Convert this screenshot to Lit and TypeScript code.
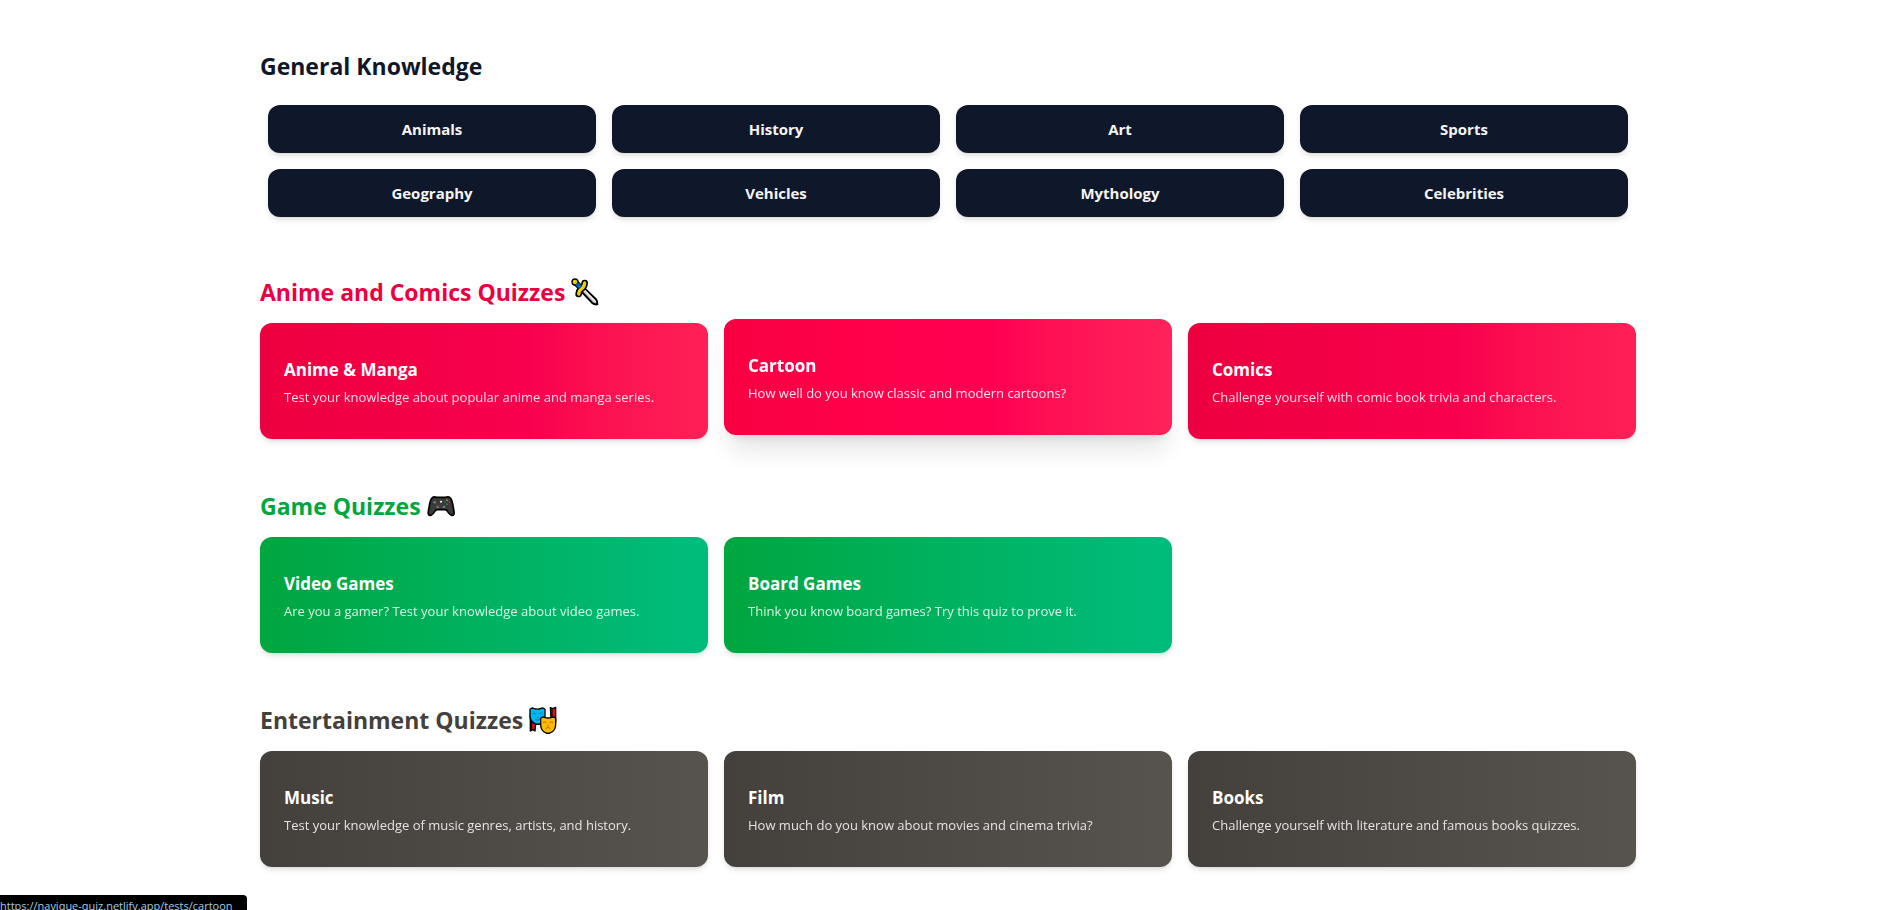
import { LitElement, html, css, svg } from "lit";
import { customElement, property } from "lit/decorators.js";

interface Quiz {
  title: string;
  text: string;
  active?: boolean;
}

interface Group {
  title: string;
  tone: "rose" | "green" | "stone";
  quizzes: Quiz[];
}

const TOPICS = ["Animals", "History", "Art", "Sports", "Geography", "Vehicles", "Mythology", "Celebrities"];

const GROUPS: Group[] = [
  {
    title: "Anime and Comics Quizzes",
    tone: "rose",
    quizzes: [
      { title: "Anime & Manga", text: "Test your knowledge about popular anime and manga series." },
      { title: "Cartoon", text: "How well do you know classic and modern cartoons?", active: true },
      { title: "Comics", text: "Challenge yourself with comic book trivia and characters." },
    ],
  },
  {
    title: "Game Quizzes",
    tone: "green",
    quizzes: [
      { title: "Video Games", text: "Are you a gamer? Test your knowledge about video games." },
      { title: "Board Games", text: "Think you know board games? Try this quiz to prove it." },
    ],
  },
  {
    title: "Entertainment Quizzes",
    tone: "stone",
    quizzes: [
      { title: "Music", text: "Test your knowledge of music genres, artists, and history." },
      { title: "Film", text: "How much do you know about movies and cinema trivia?" },
      { title: "Books", text: "Challenge yourself with literature and famous books quizzes." },
    ],
  },
];

const ICONS = {
  // dagger
  rose: svg`
    <path d="M27 36 L36 27 L74 63 Q80 70 79 79 Q70 80 63 74 Z" fill="#c8c8c8" stroke="#000" stroke-width="6" stroke-linejoin="round"/>
    <path d="M35 31 L74 71" stroke="#f0f0f0" stroke-width="4"/>
    <path d="M12 12 L30 30" stroke="#000" stroke-width="18"/>
    <circle cx="12" cy="12" r="11" fill="#000"/>
    <path d="M41 15 Q40 26 32 32 Q24 37 23 48" fill="none" stroke="#000" stroke-width="20" stroke-linecap="round"/>
    <circle cx="12" cy="12" r="7" fill="#e8cf0c"/>
    <path d="M41 15 Q40 26 32 32 Q24 37 23 48" fill="none" stroke="#e8cf0c" stroke-width="10" stroke-linecap="round"/>
    <path d="M16 16 L29 29" stroke="#0063b1" stroke-width="11"/>`,
  // game controller
  green: svg`
    <path d="M16 17 Q21 13 29 16 H56 Q64 13 69 17 Q74 20 77 36 L81 58 Q83 71 74 70 Q68 69 60 56 Q58 53 54 53 H31 Q27 53 25 56 Q17 69 11 70 Q2 71 4 58 L8 36 Q11 20 16 17 Z" fill="#3b3b3b" stroke="#000" stroke-width="5" stroke-linejoin="round"/>
    <circle cx="23" cy="31" r="4" fill="#777"/><circle cx="51" cy="45" r="4" fill="#777"/>
    <path d="M32 40 V50 M27 45 H37" stroke="#777" stroke-width="3"/>
    <circle cx="42" cy="29" r="3" fill="#fff"/>
    <circle cx="60" cy="25" r="2.5" fill="#f0b400"/><circle cx="54" cy="31" r="2.5" fill="#0078d7"/>
    <circle cx="66" cy="31" r="2.5" fill="#e81123"/><circle cx="60" cy="37" r="2.5" fill="#16a34a"/>`,
  // theatre masks
  stone: svg`
    <path d="M4 26 V75 L11 71 L18 75 L20 52 Z" fill="#d50f25" stroke="#000" stroke-width="4" stroke-linejoin="round"/>
    <path d="M64 5 L71 8 L80 4 V48 L66 36 Z" fill="#d50f25" stroke="#000" stroke-width="4" stroke-linejoin="round"/>
    <path d="M69 9 V36" stroke="#000" stroke-width="3"/><path d="M8 44 V72" stroke="#000" stroke-width="3"/>
    <path d="M3 10 Q8 4 14 7 Q25 12 36 7 Q43 4 48 10 V30 Q48 47 32 54 Q26 56 20 54 Q3 47 3 30 Z" fill="#00b7f4" stroke="#000" stroke-width="4"/>
    <path d="M11 24 Q15 19 20 24 M30 24 Q35 19 40 24 M18 39 Q26 47 33 39 M24 34 H28" fill="none" stroke="#00639c" stroke-width="2.5"/>
    <path d="M35 37 Q40 31 46 34 Q57 38 68 34 Q75 31 80 37 V57 Q79 75 63 81 Q57 83 51 81 Q36 75 35 57 Z" fill="#ffb900" stroke="#000" stroke-width="4"/>
    <path d="M42 50 Q47 45 52 50 M62 50 Q67 45 72 50 M50 68 Q57 60 64 68 M55 59 H59" fill="none" stroke="#9a5b00" stroke-width="2.5"/>`,
};

@customElement("quiz-card")
export class QuizCard extends LitElement {
  @property({ attribute: false }) quiz!: Quiz;
  @property() tone = "rose";

  static styles = css`
    :host {
      display: block;
    }
    .card {
      display: block;
      box-sizing: border-box;
      height: 100%;
      padding: 32px 24px;
      border-radius: 12px;
      color: #fff;
      text-decoration: none;
      box-shadow: 0 4px 6px -1px rgb(0 0 0 / 0.1), 0 2px 4px -2px rgb(0 0 0 / 0.1);
    }
    .rose {
      background: linear-gradient(to right in oklab, oklch(58.6% 0.253 17.585), oklch(64.5% 0.246 16.439));
    }
    .green {
      background: linear-gradient(to right in oklab, oklch(62.7% 0.194 149.214), oklch(69.6% 0.17 162.48));
    }
    .stone {
      background: linear-gradient(to right in oklab, oklch(37.4% 0.01 67.558), oklch(44.4% 0.011 73.639));
    }
    .active,
    .card:hover {
      transform: translateY(-4px);
      filter: brightness(1.05);
      box-shadow: 0 20px 25px -5px rgb(0 0 0 / 0.1), 0 8px 10px -6px rgb(0 0 0 / 0.1);
    }
    .title {
      margin: 0 0 2px;
      font-size: 17px;
      line-height: 30px;
      font-weight: 700;
    }
    .text {
      margin: 0;
      font-size: 13px;
      line-height: 20px;
      opacity: 0.85;
    }
  `;

  render() {
    const { title, text, active } = this.quiz;
    return html`<a class="card ${this.tone} ${active ? "active" : ""}" href="#">
      <h3 class="title">${title}</h3>
      <p class="text">${text}</p>
    </a>`;
  }
}

@customElement("app-root")
export class AppRoot extends LitElement {
  static styles = css`
    :host {
      display: block;
      font-family: "Open Sans", "Noto Sans", sans-serif;
      background: #fff;
    }
    .page {
      display: flex;
      flex-direction: column;
      gap: 50px;
      box-sizing: border-box;
      max-width: 1440px;
      margin: 0 auto;
      padding: 49px 32px 40px;
    }
    .heading {
      display: flex;
      align-items: center;
      gap: 6px;
      margin: 0 0 14px;
      font-size: 23px;
      line-height: 34px;
      font-weight: 700;
      color: #0f172b;
    }
    .heading.rose {
      color: #ec003f;
    }
    .heading.green {
      color: #00a63e;
    }
    .heading.stone {
      color: #44403b;
    }
    .icon {
      width: 28px;
      height: 28px;
      flex: none;
    }
    .topics {
      display: grid;
      grid-template-columns: repeat(4, 1fr);
      gap: 16px;
      padding: 8px;
    }
    .topic {
      padding: 12px 16px;
      border: 0;
      border-radius: 12px;
      background: #0f172b;
      color: #f5f5f4;
      font: 700 15px/24px "Open Sans", "Noto Sans", sans-serif;
      box-shadow: 0 4px 6px -1px rgb(0 0 0 / 0.1), 0 2px 4px -2px rgb(0 0 0 / 0.1);
      cursor: pointer;
    }
    .cards {
      display: grid;
      grid-template-columns: repeat(3, 1fr);
      gap: 16px;
    }
    .status {
      position: fixed;
      left: 0;
      bottom: 0;
      box-sizing: border-box;
      height: 15px;
      padding: 2px 14px 0 0;
      overflow: hidden;
      border-radius: 0 4px 0 0;
      background: #000;
      color: #a5cbe6;
      font-size: 11px;
      line-height: 18px;
      white-space: nowrap;
    }
    @media (max-width: 900px) {
      .topics {
        grid-template-columns: repeat(2, 1fr);
      }
      .cards {
        grid-template-columns: 1fr;
      }
    }
  `;

  render() {
    return html`
      <main class="page">
        <section>
          <h2 class="heading">General Knowledge</h2>
          <div class="topics">${TOPICS.map((t) => html`<button class="topic" type="button">${t}</button>`)}</div>
        </section>
        ${GROUPS.map(
          (g) => html`<section>
            <h2 class="heading ${g.tone}">
              ${g.title}
              <svg class="icon" viewBox="0 0 84 84" aria-hidden="true">${ICONS[g.tone]}</svg>
            </h2>
            <div class="cards">
              ${g.quizzes.map((q) => html`<quiz-card .quiz=${q} tone=${g.tone}></quiz-card>`)}
            </div>
          </section>`
        )}
      </main>
      <div class="status">https://navique-quiz.netlify.app/tests/cartoon</div>
    `;
  }
}
